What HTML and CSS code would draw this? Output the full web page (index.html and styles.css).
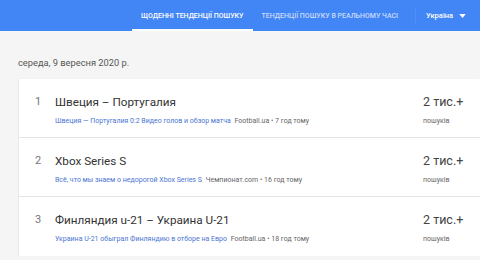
FILE: index.html
```html
<!DOCTYPE html>
<html lang="uk">
<head>
    <meta charset="UTF-8">
    <title>Тенденції пошуку</title>
    <link rel="stylesheet" href="styles.css">
</head>
<body>
    <header class="topbar">
        <nav class="tabs">
            <a class="tab active">Щоденні тенденції пошуку</a>
            <a class="tab">Тенденції пошуку в реальному часі</a>
        </nav>
        <div class="region">
            <span>Україна</span>
            <svg width="7" height="4" viewBox="0 0 8 5"><path d="M0 0h8L4 5z" fill="#fff"/></svg>
        </div>
    </header>

    <main class="feed">
        <div class="date">середа, 9 вересня 2020 р.</div>
        <div class="card">
            <div class="row">
                <div class="num">1</div>
                <div class="info">
                    <div class="title">Швеция – Португалия</div>
                    <div class="sub"><span class="link">Швеция — Португалия 0:2 Видео голов и обзор матча</span> <span class="src">Football.ua • 7 год тому</span></div>
                </div>
                <div class="count">
                    <div class="big">2 тис.+</div>
                    <div class="small">пошуків</div>
                </div>
            </div>
            <div class="row">
                <div class="num">2</div>
                <div class="info">
                    <div class="title">Xbox Series S</div>
                    <div class="sub"><span class="link">Всё, что мы знаем о недорогой Xbox Series S</span> <span class="src">Чемпионат.com • 16 год тому</span></div>
                </div>
                <div class="count">
                    <div class="big">2 тис.+</div>
                    <div class="small">пошуків</div>
                </div>
            </div>
            <div class="row">
                <div class="num">3</div>
                <div class="info">
                    <div class="title">Финляндия u-21 – Украина U-21</div>
                    <div class="sub"><span class="link">Украина U-21 обыграл Финляндию в отборе на Евро</span> <span class="src">Football.ua • 18 год тому</span></div>
                </div>
                <div class="count">
                    <div class="big">2 тис.+</div>
                    <div class="small">пошуків</div>
                </div>
            </div>
        </div>
    </main>
</body>
</html>
```

FILE: styles.css
```css
body {
    margin: 0;
    background-color: #f5f5f5;
    font-family: Roboto, "Liberation Sans", Arial, sans-serif;
    color: #333;
}

.topbar {
    display: flex;
    align-items: stretch;
    height: 31px;
    background-color: #4285f4;
    color: #fff;
}

.tabs {
    display: flex;
    padding-left: 132px;
}

.tab {
    display: flex;
    align-items: center;
    padding: 2px 9px 0 9px;
    font-size: 7px;
    font-weight: 500;
    white-space: nowrap;
    text-transform: uppercase;
    color: rgba(255, 255, 255, 0.72);
    border-bottom: 2px solid transparent;
    box-sizing: border-box;
}

.tab.active {
    color: #fff;
    border-bottom-color: #fff;
}

.region {
    display: flex;
    align-items: center;
    gap: 6px;
    margin-left: 8px;
    padding-left: 10px;
    font-size: 7.5px;
    font-weight: 500;
    white-space: nowrap;
    border-left: 1px solid rgba(255, 255, 255, 0.08);
    height: 16px;
    align-self: center;
}

.feed {
    padding-left: 19px;
}

.date {
    padding: 26px 0 11px 0;
    font-size: 9.3px;
    color: #555;
    line-height: 11px;
    margin-left: -1px;
}

.card {
    background-color: #fff;
    box-shadow: 0 1px 2px rgba(0, 0, 0, 0.12);
}

.row {
    display: flex;
    align-items: flex-start;
    height: 59px;
    box-sizing: border-box;
    padding-top: 15px;
    border-bottom: 1px solid #e4e4e4;
}

.row:last-child {
    border-bottom: none;
}

.num {
    width: 36px;
    text-align: center;
    font-size: 11px;
    line-height: 16px;
    color: #757575;
    padding-left: 2px;
    box-sizing: border-box;
}

.info {
    flex: 1;
}

.title {
    font-size: 11.7px;
    line-height: 16px;
    color: #333;
}

.sub {
    margin-top: 7px;
    font-size: 7px;
    line-height: 9px;
}

.link {
    color: #4a76d2;
}

.src {
    color: #666;
    margin-left: 2px;
}

.count {
    width: 57px;
}

.big {
    font-size: 12.5px;
    line-height: 16px;
    color: #444;
}

.small {
    margin-top: 7px;
    font-size: 7px;
    line-height: 9px;
    color: #666;
}
```
